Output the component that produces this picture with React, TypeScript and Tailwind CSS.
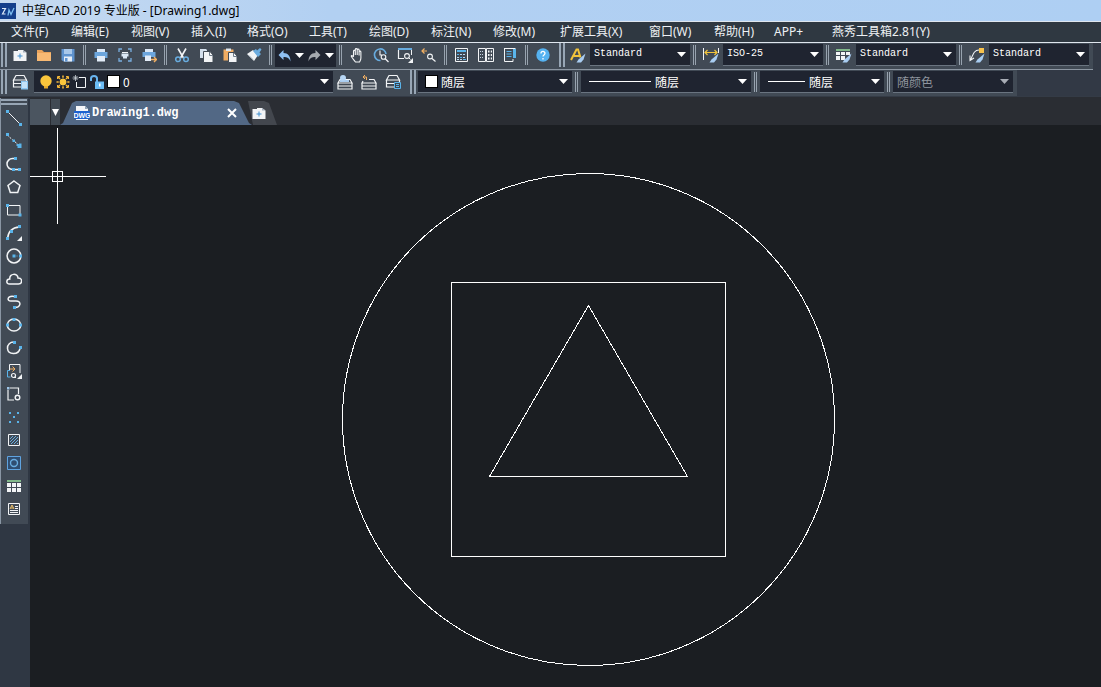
import type { ReactNode } from "react";

const B = "#5ab4ea";
const L = "#a9cdf2";
const W = "#f2f4f6";
const O = "#f3b062";

function Svg({ children, box = 16 }: { children: ReactNode; box?: number }) {
  return (
    <svg width={box} height={box} viewBox={`0 0 ${box} ${box}`} fill="none" aria-hidden="true" className="shrink-0">
      {children}
    </svg>
  );
}

const stack = (
  <path d="M4 1.500h8l2.500 4.500h-13zM1.500 6v3.500h13V6M1.500 9.500V13h13V9.500" stroke={W} strokeWidth="1.200" />
);

const brush = <path d="M15.500 6.500L12 9.500l-3.500 3L6.500 15.500h4.500l2.500-3z" fill={L} />;

const icons: Record<string, ReactNode> = {
  new: (
    <>
      <path d="M1.500 4H6V3h5l3.500 2.500V14h-13z" fill={W} />
      <path d="M11 3l3.500 2.500H11z" fill="#a3aebb" />
      <path d="M8 6.500v5M5.500 9h5" stroke="#3f8fd0" />
    </>
  ),
  open: (
    <>
      <path d="M1 3h5l2 2h7v9H1z" fill="#e9a35c" />
      <path d="M1 6h14v8H1z" fill="#f8b973" />
    </>
  ),
  save: (
    <>
      <path d="M1.500 2H14.500v12.500H3.500L1.500 13z" fill="#5f93cf" />
      <path d="M4 2h8v5H4z" fill="#a9c8ea" />
      <path d="M4 9.500h8v5H4z" fill="#e6eef8" />
      <path d="M5 11h2.500v3.500H5z" fill="#5f93cf" />
    </>
  ),
  print: (
    <>
      <path d="M4 2h8v3H4z" fill="#dbe8f6" />
      <path d="M1.500 5h13v6h-13z" fill="#6ca6dd" />
      <path d="M4 9h8v5.500H4z" fill="#e3edf8" />
    </>
  ),
  preview: (
    <>
      <path d="M2 5V2h3M11 2h3v3M14 11v3h-3M5 14H2v-3" stroke="#79aee0" strokeWidth="1.300" />
      <path d="M5 5h6v1H5z" fill={W} />
      <path d="M4.500 6.500h7v3h-1.500v2H6v-2H4.500z" fill="#dce8f4" />
    </>
  ),
  publish: (
    <>
      <path d="M4 2h8v3H4z" fill="#dbe8f6" />
      <path d="M1.500 5h13v5h-13z" fill="#6ca6dd" />
      <path d="M4 8.500h6V14H4z" fill="#e3edf8" />
      <path d="M10 12.500h5M13 10l2.500 2.500L13 15" stroke={O} strokeWidth="1.400" />
    </>
  ),
  cut: (
    <>
      <path d="M4 1.500l5.500 9.500M12 1.500L6.500 11" stroke={W} strokeWidth="1.600" />
      <circle cx="4" cy="12.300" r="2.300" stroke="#68acdf" strokeWidth="1.500" />
      <circle cx="12" cy="12.300" r="2.300" stroke="#68acdf" strokeWidth="1.500" />
    </>
  ),
  copy: (
    <>
      <path d="M2 2h6l1 1v8H2z" fill="#d4e0ed" />
      <path d="M5.500 4.500H12l3 3.500v7.500H5.500z" fill={W} stroke="#414a55" />
      <path d="M11.500 5v3.500H15" stroke="#6f7c8a" />
    </>
  ),
  paste: (
    <>
      <path d="M1.500 2.500h10v11h-10z" fill="#f0ac62" />
      <path d="M4 1.500h5v2.500H4z" fill="#dde5ee" />
      <path d="M6.500 5.500H12L15 9v6.500H6.500z" fill={W} stroke="#414a55" />
      <path d="M11.500 6v3.500H15" stroke="#6f7c8a" />
    </>
  ),
  match: (
    <>
      <path d="M1 7l6-4 5 5-4 6z" fill={W} />
      <path d="M7 4l3-2 1 1.500L14 1l1.500 1.500-2 3L15 7l-3 3z" fill="#6bacdf" />
      <path d="M3 8.500l4 4" stroke="#a8b5c2" />
    </>
  ),
  undo: <path d="M6.500 2L1.500 7l5 5V9c4 0 5.500 1 7 4.500C13.500 8 11 5 6.500 5z" fill="#8fc0f2" />,
  redo: <path d="M8.500 2l5 5-5 5V9c-4 0-5.500 1-7 4.500C1.500 8 4 5 8.500 5z" fill="#a6aab0" />,
  hand: (
    <path
      d="M4.500 9.500V4.300c0-1.200 1.800-1.200 1.800 0V8V2.500c0-1.200 1.900-1.200 1.900 0V8 3c0-1.200 1.900-1.200 1.900 0v5.500V5c0-1.200 1.800-1.200 1.800 0v6c0 2-1 3-1.400 4H6.500C5 13 3.500 11.500 2.500 9.800c-.8-1.300.7-1.800 2 .2"
      stroke={W}
      strokeWidth="1.100"
    />
  ),
  zoomRealtime: (
    <>
      <path d="M7.500 13.500A5.800 5.800 0 1 1 13 7" stroke="#68acdf" strokeWidth="1.600" />
      <path d="M7 3.500V8h2" stroke={W} strokeWidth="1.100" />
      <circle cx="10.500" cy="10" r="2.300" stroke={W} strokeWidth="1.100" />
      <path d="M12 11.500l3.500 3.500" stroke={W} strokeWidth="1.200" />
    </>
  ),
  zoomWindow: (
    <>
      <path d="M7 11.500H1.500V3" stroke={W} strokeWidth="1.200" />
      <path d="M1 2h14" stroke="#68acdf" strokeWidth="2" />
      <path d="M14.500 3v5" stroke={W} />
      <circle cx="10" cy="9" r="2.400" stroke={W} strokeWidth="1.100" />
      <path d="M11.500 10.500l2 2" stroke={W} />
      <path d="M16 11v5h-5z" fill={W} />
    </>
  ),
  zoomPrevious: (
    <>
      <path d="M1 4h5M3.500 1.500L1 4l2.500 2.500" stroke={O} strokeWidth="1.200" />
      <circle cx="9" cy="9.500" r="2.400" stroke={W} strokeWidth="1.100" />
      <path d="M11 11.500l3.500 3" stroke={W} strokeWidth="1.200" />
    </>
  ),
  calc: (
    <>
      <path d="M1.500 1.500h12v13h-12z" stroke={W} />
      <path d="M3 4h9" stroke={B} strokeWidth="2" />
      <path d="M3 7.500h9M3 10.500h9M3 12.500h9" stroke="#b9d7f0" strokeDasharray="2 1" />
      <path d="M3 7.500h2M6 10.500h2M9 12.500h3" stroke={B} />
    </>
  ),
  center: (
    <>
      <path d="M.5 1.500h7v13h-7zM8.500 1.500h7v13h-7z" stroke={W} />
      <path d="M2 4.500h4M2 7.500h4M2 10.500h4" stroke="#c5d3e0" strokeDasharray="1 1" />
      <path d="M10 3.500h1.500v2H10zM12.800 3.500H14v2h-1.200zM10 7h1.500v2H10zM12.800 7H14v2h-1.200zM10 10.500h1.500v2H10zM12.800 10.500H14v2h-1.200z" fill={W} />
    </>
  ),
  props: (
    <>
      <path d="M2.500 1.500h11M2.500 1v13.500h8.500V12" stroke={W} />
      <path d="M11 2h3v9h-3z" fill={B} />
      <path d="M4.500 4.500h5M4.500 7h5M4.500 9.500h5" stroke={B} strokeWidth="1.200" />
    </>
  ),
  help: (
    <>
      <circle cx="8" cy="8" r="6.700" fill="#55b2f1" />
      <path d="M6 6.500c0-2.700 4-2.700 4-.2C10 7.800 8 8 8 9.500M8 11v1.500" stroke="#fff" strokeWidth="1.300" />
    </>
  ),
  textStyle: (
    <>
      <path d="M1 13L6.500 2.500H8l2.500 8M4 9h5.500" stroke="#f2c43b" strokeWidth="2" />
      {brush}
    </>
  ),
  dimStyle: (
    <>
      <path d="M.5 1v12M15.500 1v5" stroke={W} />
      <path d="M2 5.500h12M4.500 3L2 5.500 4.500 8M11.500 3L14 5.500 11.500 8" stroke="#f2c43b" strokeWidth="1.200" />
      {brush}
    </>
  ),
  tableStyle: (
    <>
      <path d="M0 3h14" stroke="#82b98b" strokeWidth="2" />
      <path d="M0 5h4v3H0zM5 5h4v3H5zM10 5h4v3h-4zM0 9h4v4H0zM5 9h4v4H5z" fill={W} />
      {brush}
    </>
  ),
  leaderStyle: (
    <>
      <path d="M10 3C6 3 5 5 1.500 13M1 8.500v5l4-2.500" stroke={W} strokeWidth="1.100" />
      {brush}
      <path d="M10 1h5v5h-5z" fill="#f7c24d" />
    </>
  ),
  layers: (
    <>
      {stack}
      <path d="M9 7h7v8.500H9z" fill="#8cc6f2" />
      <path d="M10 9h5M10 11h5M10 13h5" stroke="#fff" />
    </>
  ),
  layerCurrent: (
    <>
      <path d="M3 5.500h10l2 3.500H1zM1 9v3h14V9M1 12v3h14v-3" stroke={W} strokeWidth="1.200" />
      <path d="M3 6h9v2H3z" fill="#a9cdf2" />
      <circle cx="6" cy="4" r="3" fill="#b7d6f4" />
    </>
  ),
  layerPrevious: (
    <>
      <path d="M8 5.500h5L15 9H1l1-2M1 9v3h14V9M1 12v3h14v-3" stroke={W} strokeWidth="1.200" />
      <path d="M2 3h3.500v3M4 1L2 3l2 2" stroke={O} />
    </>
  ),
  layerState: (
    <>
      {stack}
      <path d="M9.500 8.500h6v6h-6z" fill="#3b4652" stroke={B} />
      <path d="M11 10.500h3M11 12.500h3" stroke={B} />
    </>
  ),
  line: (
    <>
      <path d="M2 2l12 12" stroke={W} />
      <path d="M0 0h3v3H0zM13 13h3v3h-3z" fill={B} />
    </>
  ),
  xline: (
    <>
      <path d="M1 2l14 12" stroke={W} strokeDasharray="2 1.500" />
      <path d="M0 0h3v3H0zM6.500 6.500h2.500v2.500H6.500zM10.500 11h2.500v2h-2.500zM13 10.500h2.500V15h-4v-2H13z" fill={B} />
    </>
  ),
  polyline: (
    <>
      <path d="M10 2.500H6.500a5 5 0 0 0 0 11H14" stroke={W} strokeWidth="1.500" />
      <path d="M8 1h3v3H8zM6 12h3v3H6zM12 12h3v3h-3z" fill={B} />
    </>
  ),
  polygon: <path d="M8 2l6 4.500-2.300 7H4.300L2 6.500z" stroke={W} strokeWidth="1.500" />,
  rect: (
    <>
      <path d="M1.500 3.500h12.500v9.500H1.500z" stroke={W} />
      <path d="M0 2h3v3H0zM12.500 11.500h3v3h-3z" fill={B} />
    </>
  ),
  arc: (
    <>
      <path d="M1.500 14C2 7 6 2.500 13.500 2" stroke={W} strokeWidth="1.500" />
      <path d="M0 12h3v3H0zM4 5h3v3H4zM12 0h3v3h-3z" fill={B} />
      <path d="M16 11v5h-5z" fill={W} />
    </>
  ),
  circle: (
    <>
      <circle cx="8" cy="8" r="6.900" stroke={W} strokeWidth="1.500" />
      <path d="M6.500 6.500h3v3h-3zM13 6.500h3v3h-3zM10.500 7.500h1v1h-1z" fill={B} />
    </>
  ),
  cloud: <path d="M3.500 13C-.2 13 0 8 3.800 8 3 2 12 2 12 7c5 0 4.500 6 .5 6z" stroke={W} strokeWidth="1.500" />,
  spline: (
    <>
      <path d="M8 2.500C1 1.500.5 7 5 7h5c6 0 5 7-2 6.500" stroke={W} strokeWidth="1.500" />
      <path d="M8 1h3v3H8zM7 12h3v3H7z" fill={B} />
    </>
  ),
  ellipse: (
    <>
      <ellipse cx="8" cy="8" rx="6.700" ry="6" stroke={W} strokeWidth="1.500" />
      <path d="M6.500 1h3v3h-3zM0 6.500h3v3H0zM13 6.500h3v3h-3z" fill={B} />
    </>
  ),
  ellipseArc: (
    <>
      <path d="M9 2.200C4 1.500 1.200 5 1.500 8.500c.5 6.500 11 7 12.500 0" stroke={W} strokeWidth="1.500" />
      <path d="M7 1h3v3H7zM13 6h3v3h-3z" fill={B} />
    </>
  ),
  insert: (
    <>
      <path d="M3.500 7V1.500h10.500V10M10 14.500H8" stroke={W} />
      <path d="M4 7.500H1.500v6.500H4.500" stroke={B} />
      <path d="M4 6h5M6.500 3.500L9 6 6.500 8.500" stroke={O} />
      <circle cx="7.500" cy="12.500" r="2" stroke={W} strokeWidth="1.200" />
      <path d="M16 11v5h-5z" fill={W} />
    </>
  ),
  block: (
    <>
      <path d="M4 2h8.500v6M2 4v10h6" stroke={W} strokeWidth="1.200" />
      <path d="M1 1h2.500v2.500H1z" fill="#9fc6e8" />
      <circle cx="11.500" cy="11.500" r="2.300" stroke={W} strokeWidth="1.400" />
    </>
  ),
  point: <path d="M3 3h2v2H3zM11 3h2v2h-2zM7 7h2v2H7zM3 12h2v2H3zM11 12h2v2h-2z" fill={B} />,
  hatch: (
    <>
      <path d="M2.500 2.500h11v11h-11z" stroke={W} />
      <path d="M4 7l3-3M4 10l6-6M5 12l7-7M8 12l4-4M11 12l1-1" stroke="#68acdf" />
    </>
  ),
  region: (
    <>
      <path d="M1.500 1.500h13v13h-13z" fill="#2f4d70" stroke="#5fa3e0" />
      <circle cx="8" cy="8" r="3.500" stroke="#68acdf" strokeWidth="1.400" />
    </>
  ),
  table: (
    <>
      <path d="M1 2h14v2H1z" fill="#82b98b" />
      <path d="M1 5h4v4H1zM6 5h4v4H6zM11 5h4v4h-4zM1 10h4v4H1zM6 10h4v4H6zM11 10h4v4h-4z" fill={W} />
    </>
  ),
  mtext: (
    <>
      <path d="M2.500 2.500h11v11h-11z" stroke={W} />
      <path d="M4 8l2-4 2 4M5 7h2" stroke="#f2c46b" />
      <path d="M9 5.500h3M9 7.500h3M4 9.500h8M4 11.500h8" stroke={W} />
    </>
  ),
  bulb: (
    <>
      <circle cx="8" cy="7" r="5.700" fill="#fbc63c" />
      <path d="M6 12h4v2.500H6z" fill="#e9ad2e" />
    </>
  ),
  sun: (
    <>
      <path d="M8 1.500v13M1.500 8h13M3 3l10 10M13 3L3 13" stroke="#f3b73a" strokeWidth="1.600" />
      <path d="M2.500 5V2.500H5M11 2.500h2.500V5M13.500 11v2.500H11M5 13.500H2.500V11" stroke="#f3b73a" />
      <circle cx="8" cy="8" r="4" fill="#fbc63c" stroke="#262b35" />
    </>
  ),
  freeze: (
    <>
      <path d="M7 3.500h6.500v10h-9V8" stroke={W} />
      <path d="M3.500 1v6M.5 4h6M1.500 2l4 4M5.500 2l-4 4" stroke="#c8ced4" strokeWidth=".8" />
    </>
  ),
  lock: (
    <>
      <path d="M2 7V4.500c0-3.500 6-3.500 6 0V8" stroke="#69b4ee" strokeWidth="2" />
      <path d="M6 7.500h9V15H6z" fill="#6bbcf5" />
      <path d="M10 9.500h1.500v3H10z" fill="#fff" />
    </>
  ),
};

function Tool({ icon, label }: { icon: string; label: string }) {
  return (
    <button type="button" aria-label={label} title={label} className="flex h-6 w-6 shrink-0 items-center justify-center hover:bg-[#56616e]">
      <Svg>{icons[icon]}</Svg>
    </button>
  );
}

function Sep() {
  return (
    <div className="flex w-[9px] shrink-0 justify-center gap-px self-stretch py-0.5">
      <span className="w-px bg-[#98a3af]" />
      <span className="w-px bg-[#98a3af]" />
    </div>
  );
}

function Grip() {
  return (
    <div className="flex w-2 shrink-0 justify-center gap-0.5 self-stretch">
      <span className="w-0.5 bg-[#98a6b5]" />
      <span className="w-0.5 bg-[#98a6b5]" />
    </div>
  );
}

function Caret({ dim = false }: { dim?: boolean }) {
  return (
    <svg width="9" height="5" viewBox="0 0 9 5" aria-hidden="true" className="pointer-events-none shrink-0">
      <path d="M0 0h9L4.500 5z" fill={dim ? "#a8adb5" : "#fff"} />
    </svg>
  );
}

type ComboProps = { label: string; value: string; width: string; before?: ReactNode; cjk?: boolean; dim?: boolean };

function Combo({ label, value, width, before, cjk = false, dim = false }: ComboProps) {
  return (
    <div className={`flex h-[22px] shrink-0 items-center border-b border-[#6a7480] bg-[#1f2430] px-1 ${width}`}>
      {before}
      <select
        aria-label={label}
        disabled={dim}
        className={`h-5 min-w-0 flex-1 appearance-none bg-transparent outline-none ${
          cjk ? "font-['Noto_Sans_CJK_SC',sans-serif] text-[12px]" : "pb-0.5 font-['Liberation_Mono',monospace] text-[10px]"
        } ${dim ? "text-[#8f959e] opacity-100" : "text-white"}`}
      >
        <option>{value}</option>
      </select>
      <Caret dim={dim} />
    </div>
  );
}

const swatch = <span className="mr-1 h-[11px] w-[11px] shrink-0 bg-white outline outline-black" />;

const menus: [string, string][] = [
  ["文件(F)", "w-[60px]"],
  ["编辑(E)", "w-[60px]"],
  ["视图(V)", "w-[60px]"],
  ["插入(I)", "w-[56px]"],
  ["格式(O)", "w-[62px]"],
  ["工具(T)", "w-[60px]"],
  ["绘图(D)", "w-[62px]"],
  ["标注(N)", "w-[62px]"],
  ["修改(M)", "w-[67px]"],
  ["扩展工具(X)", "w-[89px]"],
  ["窗口(W)", "w-[65px]"],
  ["帮助(H)", "w-[60px]"],
  ["APP+", "w-[58px]"],
  ["燕秀工具箱2.81(Y)", "w-[120px]"],
];

const drawTools: [string, string][] = [
  ["line", "直线"],
  ["xline", "构造线"],
  ["polyline", "多段线"],
  ["polygon", "正多边形"],
  ["rect", "矩形"],
  ["arc", "圆弧"],
  ["circle", "圆"],
  ["cloud", "修订云线"],
  ["spline", "样条曲线"],
  ["ellipse", "椭圆"],
  ["ellipseArc", "椭圆弧"],
  ["insert", "插入块"],
  ["block", "创建块"],
  ["point", "点"],
  ["hatch", "图案填充"],
  ["region", "面域"],
  ["table", "表格"],
  ["mtext", "多行文字"],
];

function Header() {
  return (
    <header>
      <div className="flex h-[21px] items-center gap-1.5 bg-linear-to-r from-[#c6daf0] via-[#b2d0f2] via-30% to-[#aecff3] text-[12px] text-black">
        <svg width="16" height="16" viewBox="0 0 16 16" fill="none" aria-hidden="true">
          <path d="M0 0h16v16H0z" fill="#143f8c" />
          <path d="M2 5.500h3.500l-3 5.500h3" stroke="#dce9f8" strokeWidth="1.200" />
          <path d="M8 12.500L9 7l2 4.500L14 5" stroke="#7fc0f2" strokeWidth="1.300" />
        </svg>
        <h1>中望CAD 2019 专业版 - [Drawing1.dwg]</h1>
      </div>
      <nav className="flex h-[22px] items-center border-y border-[#dfe6ee] bg-[#2f3841] pl-[11px] text-[12px] text-[#eef1f4]">
        {menus.map(([text, width]) => (
          <button key={text} type="button" className={`shrink-0 text-left whitespace-nowrap ${width}`}>
            {text}
          </button>
        ))}
      </nav>
    </header>
  );
}

function StandardBar() {
  return (
    <div className="flex h-[27px]">
      <div className="flex items-center border-b border-[#8c96a2] bg-[#414a55] pr-1 pb-0.5">
        <Grip />
        <Tool icon="new" label="新建" />
        <Tool icon="open" label="打开" />
        <Tool icon="save" label="保存" />
        <Sep />
        <Tool icon="print" label="打印" />
        <Tool icon="preview" label="打印预览" />
        <Tool icon="publish" label="发布" />
        <Sep />
        <Tool icon="cut" label="剪切" />
        <Tool icon="copy" label="复制" />
        <Tool icon="paste" label="粘贴" />
        <Tool icon="match" label="特性匹配" />
        <Sep />
        <div className="flex h-[23px] w-[61px] shrink-0 items-center justify-between bg-[#1f2430] px-0.5">
          <button type="button" aria-label="撤销"><Svg box={15}>{icons.undo}</Svg></button>
          <button type="button" aria-label="撤销列表"><Caret /></button>
          <button type="button" aria-label="重做"><Svg box={15}>{icons.redo}</Svg></button>
          <button type="button" aria-label="重做列表"><Caret /></button>
        </div>
        <Sep />
        <Tool icon="hand" label="平移" />
        <Tool icon="zoomRealtime" label="实时缩放" />
        <Tool icon="zoomWindow" label="窗口缩放" />
        <Tool icon="zoomPrevious" label="缩放上一个" />
        <Sep />
        <Tool icon="calc" label="计算器" />
        <Tool icon="center" label="设计中心" />
        <Tool icon="props" label="特性" />
        <Sep />
        <Tool icon="help" label="帮助" />
        <div className="w-[3px] shrink-0" />
        <Grip />
        <Tool icon="textStyle" label="文字样式管理" />
        <Combo label="文字样式" value="Standard" width="w-[100px]" />
        <Sep />
        <Tool icon="dimStyle" label="标注样式管理" />
        <Combo label="标注样式" value="ISO-25" width="w-[100px]" />
        <Sep />
        <Tool icon="tableStyle" label="表格样式管理" />
        <Combo label="表格样式" value="Standard" width="w-[100px]" />
        <Sep />
        <Tool icon="leaderStyle" label="引线样式管理" />
        <Combo label="引线样式" value="Standard" width="w-[100px]" />
      </div>
    </div>
  );
}

function LayerBar() {
  return (
    <div className="flex h-[27px] border-b border-[#343b46]">
      <div className="flex items-center bg-[#414a55] pr-1 pb-0.5">
        <Grip />
        <Tool icon="layers" label="图层特性" />
        <div className="w-0.5" />
        <Combo
          label="图层"
          value="0"
          width="w-[299px]"
          cjk
          before={
            <div className="flex items-center gap-px">
              <Svg>{icons.bulb}</Svg>
              <Svg>{icons.sun}</Svg>
              <Svg>{icons.freeze}</Svg>
              <Svg>{icons.lock}</Svg>
              <span className="w-px" />
              {swatch}
            </div>
          }
        />
        <Tool icon="layerCurrent" label="置为当前图层" />
        <Tool icon="layerPrevious" label="上一个图层" />
        <Tool icon="layerState" label="图层状态" />
        <div className="w-1 shrink-0" />
        <Grip />
        <div className="w-px" />
        <Combo label="颜色" value="随层" width="w-[154px]" cjk before={<span className="flex pl-1">{swatch}</span>} />
        <Sep />
        <Combo label="线型" value="随层" width="w-[170px]" cjk before={<span className="mx-1 h-px w-[62px] bg-white" />} />
        <Sep />
        <Combo label="线宽" value="随层" width="w-[124px]" cjk before={<span className="mx-1 h-px w-[37px] bg-white" />} />
        <Sep />
        <Combo label="打印样式" value="随颜色" width="w-[120px]" cjk dim />
      </div>
    </div>
  );
}

function TabStrip() {
  return (
    <div className="flex h-7 shrink-0 items-end bg-[#2a2d33]">
      <div className="h-[26px] w-5 bg-[#4b5560]" />
      <button type="button" aria-label="图纸列表" className="ml-px flex h-[26px] w-[9px] items-center justify-center bg-[#414a53]">
        <svg width="7" height="7" viewBox="0 0 7 7" aria-hidden="true" className="shrink-0">
          <path d="M0 0h7L3.500 7z" fill="#fff" />
        </svg>
      </button>
      <div className="flex h-6 w-[192px] items-center bg-[#526885] pr-3 pl-[14px] [clip-path:polygon(0_100%,3px_92%,12px_8%,16px_0,174px_0,179px_8%,189px_92%,192px_100%)]">
        <svg width="16" height="16" viewBox="0 0 16 16" aria-hidden="true" className="shrink-0">
          <path d="M2 1h9l3 3v11H2z" fill="#f5f7fa" />
          <path d="M11 1l3 3h-3z" fill="#8fa3b8" />
          <rect y="6" width="16" height="8" rx="1" fill="#1d62d0" />
          <text x="8" y="12.500" fontSize="7" fontWeight="700" textAnchor="middle" fill="#fff" fontFamily="Liberation Sans, sans-serif">
            DWG
          </text>
        </svg>
        <span className="ml-0.5 flex-1 font-['Liberation_Mono',monospace] text-[12px] leading-5 font-bold text-white">Drawing1.dwg</span>
        <button type="button" aria-label="关闭" className="flex h-4 w-4 items-center justify-center">
          <svg width="10" height="10" viewBox="0 0 10 10" aria-hidden="true">
            <path d="M1 1l8 8M9 1L1 9" stroke="#fff" strokeWidth="2" />
          </svg>
        </button>
      </div>
      <button
        type="button"
        aria-label="新建图纸"
        className="-ml-1 flex h-6 w-[29px] items-center justify-center bg-[#43474e] pr-2 [clip-path:polygon(0_0,16px_0,21px_8%,29px_100%,5px_100%)]"
      >
        <Svg>{icons.new}</Svg>
      </button>
    </div>
  );
}

function Canvas() {
  return (
    <main className="min-h-0 flex-1 overflow-hidden bg-[#1b1e22]">
      <svg width="1071" height="562" viewBox="0 0 1071 562" fill="none" stroke="#fff" shapeRendering="crispEdges" role="img" aria-label="Drawing1.dwg">
        <circle cx="558.5" cy="294.5" r="246" />
        <path d="M421.5 157.500h274v274h-274z" />
        <path d="M558.500 180.500L459.500 351.500h198z" />
        <path d="M27.500 3v96M0 51.500h76M22.500 46.500h10v10h-10z" />
      </svg>
    </main>
  );
}

export default function App() {
  return (
    <div className="flex h-screen flex-col overflow-hidden bg-[#323945] font-['Noto_Sans','Noto_Sans_CJK_SC',sans-serif]">
      <Header />
      <StandardBar />
      <LayerBar />
      <div className="flex min-h-0 flex-1">
        <aside className="w-[30px] shrink-0 overflow-hidden border-t border-[#2a2d33] bg-[#2f3743]">
          <div className="w-7 border-l border-[#8a96a4] bg-[#414a55] pr-px pb-1">
            <div className="flex flex-col gap-0.5 py-px">
              <span className="h-0.5 bg-[#98a6b5]" />
              <span className="h-0.5 bg-[#98a6b5]" />
            </div>
            {drawTools.map(([icon, label]) => (
              <button key={icon} type="button" aria-label={label} title={label} className="flex h-[23px] w-full items-center justify-center hover:bg-[#56616e]">
                <Svg>{icons[icon]}</Svg>
              </button>
            ))}
          </div>
        </aside>
        <div className="flex min-w-0 flex-1 flex-col">
          <TabStrip />
          <Canvas />
        </div>
      </div>
    </div>
  );
}
